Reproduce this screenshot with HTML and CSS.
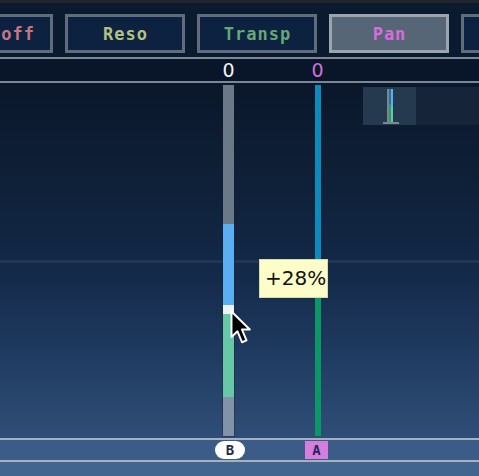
FILE: index.html
```html
<!DOCTYPE html>
<html lang="en">
<head>
    <meta charset="UTF-8">
    <meta name="viewport" content="width=device-width, initial-scale=1.0">
    <title>Pan Editor</title>
    <link rel="stylesheet" href="styles.css">
</head>
<body>
    <div class="topbar"></div>

    <div class="tabs">
        <div class="tab tab-cutoff">Cutoff</div>
        <div class="tab tab-reso">Reso</div>
        <div class="tab tab-transp">Transp</div>
        <div class="tab tab-pan active">Pan</div>
        <div class="tab"></div>
    </div>

    <div class="rule"></div>
    <div class="scale">
        <span class="value value-b">0</span>
        <span class="value value-a">0</span>
    </div>
    <div class="rule"></div>

    <div class="field">
        <!-- channel B level -->
        <div class="meter">
            <div class="seg seg-idle" style="height: 139px"></div>
            <div class="seg seg-blue" style="height: 81px"></div>
            <div class="seg seg-handle" style="height: 9px"></div>
            <div class="seg seg-teal" style="height: 83px"></div>
            <div class="seg seg-low" style="height: 39px"></div>
        </div>
        <!-- channel A level -->
        <div class="line">
            <div class="seg line-blue" style="height: 175px"></div>
            <div class="seg line-green" style="height: 176px"></div>
        </div>

        <div class="overview">
            <div class="overview-view">
                <span class="ov ov-gray"></span>
                <span class="ov ov-green"></span>
                <span class="ov ov-blue"></span>
                <span class="ov-base"></span>
            </div>
            <div class="overview-rest"></div>
        </div>

        <div class="tooltip">+28%</div>

        <svg class="cursor" width="24" height="36" viewBox="0 0 16 24">
            <path d="M1 1 L1 18 L5 14.2 L8 21.5 L11 20.2 L8 13 L13.2 13 Z" fill="#000" stroke="#fff" stroke-width="1.3" stroke-linejoin="round"/>
        </svg>
    </div>

    <div class="rule rule-light"></div>
    <div class="lanes">
        <span class="badge badge-b">B</span>
        <span class="badge badge-a">A</span>
    </div>
    <div class="rule rule-light"></div>
    <div class="foot"></div>
</body>
</html>
```

FILE: styles.css
```css
body {
    margin: 0;
    width: 479px;
    height: 476px;
    overflow: hidden;
    background-color: #0a1a2f;
    font-family: "DejaVu Sans Mono", monospace;
}
.topbar {
    height: 3px;
    background-color: #22262d;
}
.tabs {
    display: flex;
    gap: 12px;
    margin-left: -67px;
    padding-top: 11px;
    padding-bottom: 4px;
}
.tab {
    flex: 0 0 120px;
    height: 39px;
    box-sizing: border-box;
    border: 3px solid #5e6c7c;
    background-color: #0c2240;
    display: flex;
    align-items: center;
    justify-content: center;
    font-size: 17px;
    font-weight: bold;
    letter-spacing: 1px;
    padding-left: 1px;
}
.tab-cutoff {
    color: #c57685;
    justify-content: flex-end;
    padding-right: 15px;
}
.tab-reso {
    color: #b4bf82;
}
.tab-transp {
    color: #66a777;
}
.tab-pan {
    color: #d46fda;
}
.tab.active {
    background-color: #576676;
    border-color: #9ca4ad;
}
.rule {
    height: 2px;
    background-color: #7b8795;
}
.rule-light {
    background-color: #a7b2be;
}
.scale {
    height: 22px;
    display: flex;
    align-items: center;
    gap: 76px;
    padding-left: 222px;
    background-color: #09162a;
}
.value {
    font-family: "DejaVu Sans", sans-serif;
    font-size: 19px;
    width: 13px;
    text-align: center;
    line-height: 22px;
}
.value-b {
    color: #f2f4f6;
}
.value-a {
    color: #d46fda;
}
.field {
    position: relative;
    height: 355px;
    box-sizing: border-box;
    padding: 2px 0 2px 223px;
    display: flex;
    gap: 80px;
    background:
        linear-gradient(to bottom, transparent 177px, rgba(120, 150, 190, 0.12) 177px, rgba(120, 150, 190, 0.12) 180px, transparent 180px),
        linear-gradient(to bottom, #0a172a 0%, #0f2139 30%, #142a4a 55%, #1f3a5f 75%, #2f4e77 100%);
}
.meter {
    width: 11px;
    display: flex;
    flex-direction: column;
    box-shadow: 0 0 0 1px rgba(20, 30, 45, 0.35);
}
.seg {
    flex: none;
}
.seg-idle {
    background-color: #6b7887;
}
.seg-blue {
    background-color: #5aaef2;
}
.seg-handle {
    background-color: #eef3f6;
}
.seg-teal {
    background-color: #66c8a7;
}
.seg-low {
    background-color: #8293a8;
}
.line {
    width: 6px;
    display: flex;
    flex-direction: column;
    margin-left: 1px;
}
.line-blue {
    background-color: #0b8bbb;
}
.line-green {
    background-color: #0a9867;
}
.overview {
    position: absolute;
    left: 363px;
    top: 4px;
    right: 0;
    height: 38px;
    display: flex;
}
.overview-view {
    position: relative;
    width: 53px;
    background-color: #263a4f;
}
.overview-rest {
    flex: 1;
    background-color: #152439;
}
.ov {
    position: absolute;
    top: 2px;
    bottom: 3px;
    width: 2px;
}
.ov-gray {
    left: 24px;
    background-color: #7c8692;
}
.ov-green {
    left: 26px;
    background: linear-gradient(#2b6f9a 0%, #2b6f9a 45%, #2a9a6a 45%);
}
.ov-blue {
    left: 28px;
    width: 2px;
    background: linear-gradient(#5aaef2 0%, #5aaef2 55%, #66c8a7 55%);
}
.ov-base {
    position: absolute;
    left: 20px;
    width: 16px;
    bottom: 1px;
    height: 2px;
    background-color: #7a8796;
}
.tooltip {
    position: absolute;
    left: 259px;
    top: 176px;
    width: 69px;
    height: 39px;
    box-sizing: border-box;
    border: 1px solid #d9d9b0;
    background-color: #fdfdc9;
    color: #111;
    font-family: "DejaVu Sans", sans-serif;
    font-size: 20px;
    line-height: 37px;
    padding-left: 5px;
}
.cursor {
    position: absolute;
    left: 230px;
    top: 227px;
}
.lanes {
    height: 20px;
    display: flex;
    align-items: center;
    gap: 60px;
    padding-left: 215px;
    background-color: #3b5c87;
}
.badge {
    height: 18px;
    line-height: 18px;
    text-align: center;
    font-size: 14px;
    font-weight: bold;
}
.badge-b {
    width: 30px;
    border-radius: 9px;
    background-color: #ffffff;
    color: #1d2c48;
}
.badge-a {
    width: 23px;
    background-color: #d67edf;
    color: #2b2456;
}
.foot {
    height: 14px;
    background-color: #42658f;
}
```
